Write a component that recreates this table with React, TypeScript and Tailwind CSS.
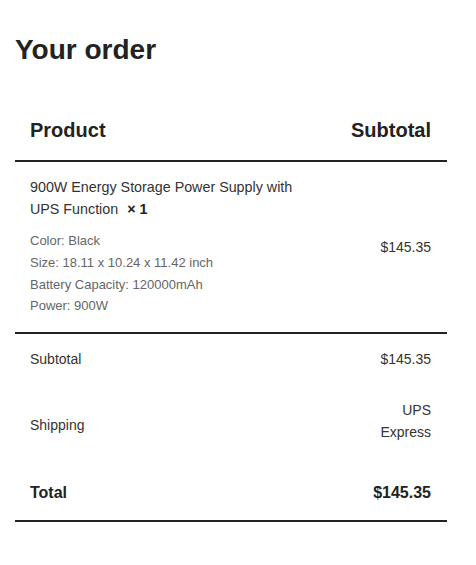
export default function App() {
  return (
    <div className="bg-white min-h-screen text-[#333]" style={{ fontFamily: '"Liberation Sans", Arial, sans-serif' }}>
      <div className="ml-[15px] w-[432px]">
        <h3 className="pt-[33px] text-[28px] leading-[34px] font-bold text-[#222]">Your order</h3>
        <div className="mt-[33px] flex justify-between pl-[15px] pr-[16px] pt-[18px] pb-[18px] border-b-2 border-[#222] text-[20px] leading-[24px] font-bold text-[#222]">
          <span>Product</span>
          <span>Subtotal</span>
        </div>
        <div className="flex items-center justify-between pl-[15px] pr-[16px] pt-[14px] pb-[15px] border-b-2 border-[#222]">
          <div className="w-[285px]">
            <div className="text-[14.3px] leading-[22px] text-[#333]">
              900W Energy Storage Power Supply with UPS Function
              <strong className="ml-[9px] font-bold text-[#222]">×&nbsp;1</strong>
            </div>
            <div className="mt-[10px] text-[13px] leading-[21.8px] text-[#666]">
              <div>Color: Black</div>
              <div>Size: 18.11 x 10.24 x 11.42 inch</div>
              <div>Battery Capacity: 120000mAh</div>
              <div>Power: 900W</div>
            </div>
          </div>
          <div className="text-[14px] leading-[20px] mt-[1px]">$145.35</div>
        </div>
        <div className="flex justify-between pl-[15px] pr-[16px] pt-[15px] pb-[15px] text-[14px] leading-[20px]">
          <span>Subtotal</span>
          <span>$145.35</span>
        </div>
        <div className="flex items-center justify-between pl-[15px] pr-[16px] pt-[15px] pb-[15px] text-[14px] leading-[22px]">
          <span className="mt-[8px]">Shipping</span>
          <span className="text-right">UPS<br />Express</span>
        </div>
        <div className="flex justify-between pl-[15px] pr-[16px] pt-[24px] pb-[16px] border-b-2 border-[#222] text-[16px] leading-[22px] font-bold text-[#222]">
          <span>Total</span>
          <span>$145.35</span>
        </div>
      </div>
    </div>
  );
}
